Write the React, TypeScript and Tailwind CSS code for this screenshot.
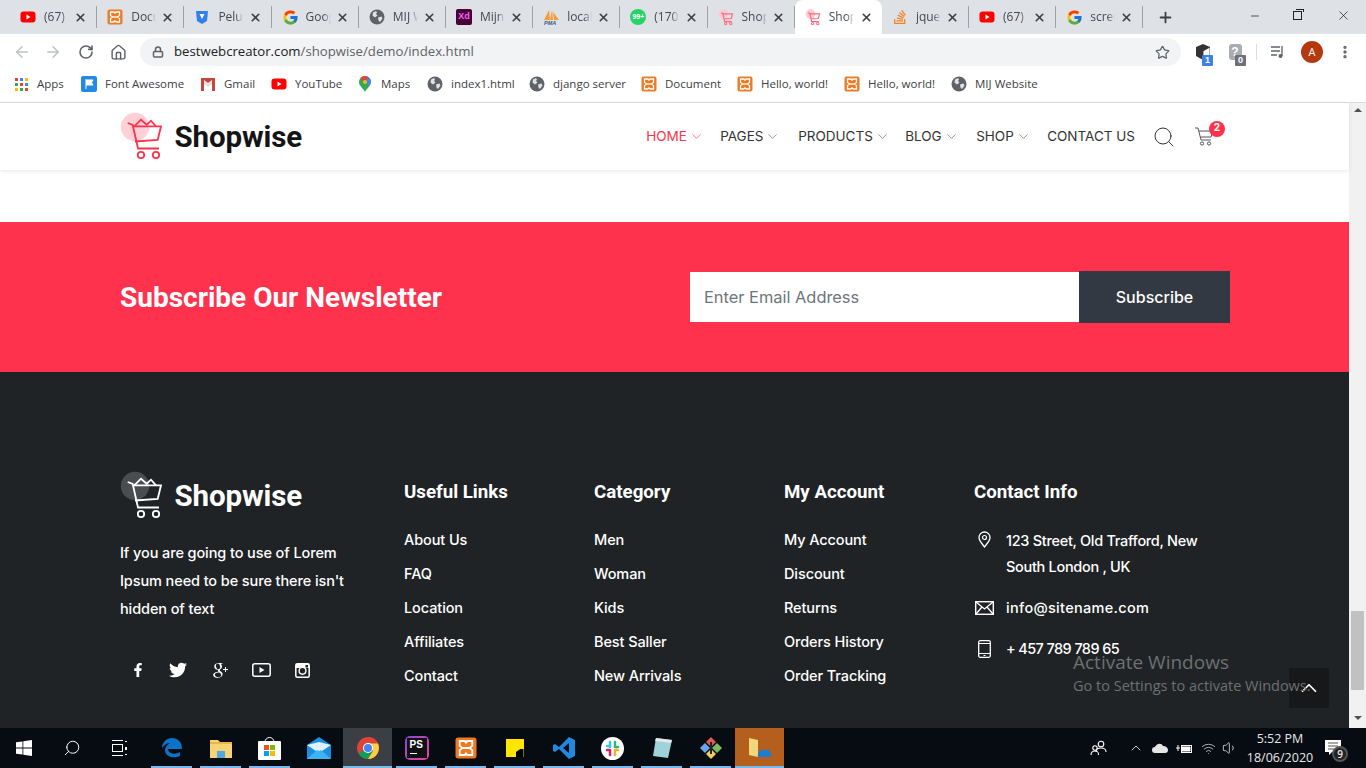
import React from "react";
import { FaFacebookF, FaTwitter, FaStackOverflow } from "react-icons/fa";
import { FcGoogle } from "react-icons/fc";
import { TiSocialGooglePlus } from "react-icons/ti";
import { LuChevronDown, LuChevronUp, LuPlus, LuX, LuMinus, LuArrowLeft, LuArrowRight, LuRotateCw, LuHouse, LuStar, LuLock, LuEllipsisVertical, LuSearch, LuVolume1, LuWifi } from "react-icons/lu";

const YouTubeIcon = () => (
  <svg width="16" height="16" viewBox="0 0 16 16"><rect x="0.5" y="2.5" width="15" height="11" rx="3" fill="#f00" /><path d="M6.5 5.5v5l4-2.5z" fill="#fff" /></svg>
);
const XamppIcon = () => (
  <svg width="16" height="16" viewBox="0 0 16 16">
    <rect x="0.5" y="0.5" width="15" height="15" rx="2" fill="#ee7a24" />
    <path d="M3.500 3h3c1 0 1.500.8 1.500 1.800C8 3.800 8.500 3 9.500 3h3v3.500L10.500 8l2 1.500V13h-3C8.500 13 8 12.200 8 11.200 8 12.200 7.500 13 6.500 13h-3V9.500l2-1.500-2-1.500z" fill="none" stroke="#fff" strokeWidth="1.300" />
    <path d="M5.500 8h5" stroke="#fff" strokeWidth="1.300" />
  </svg>
);
const GlobeIcon = () => (
  <svg width="16" height="16" viewBox="0 0 16 16"><circle cx="8" cy="8" r="7.500" fill="#5f6368" /><path d="M4 3.500l3-1.500 1 1.500-1 1.500 1.500 1.500L6 8.500 3.500 6.500zM9 8.500l3.500-1 1 2-2.500 3.500-1.500-1.500z" fill="#dee1e6" /></svg>
);
const ShopTabIcon = () => (
  <svg width="16" height="17" viewBox="0 0 44 50"><circle cx="15" cy="15" r="14.200" fill="#ffc9d1" /><path d="M7.700 11l5 2 5.300 24h21M13 14.300h28L37.700 28 15 29.500" fill="none" stroke="#ff6b7f" strokeWidth="3.500" /><circle cx="21" cy="43" r="3.500" fill="none" stroke="#ff6b7f" strokeWidth="3" /><circle cx="36" cy="43" r="3.500" fill="none" stroke="#ff6b7f" strokeWidth="3" /></svg>
);
const ShieldIcon = () => (
  <svg width="16" height="16" viewBox="0 0 16 16"><path d="M2 2h12l-1 10-5 3-5-3z" fill="#2f80ed" /><path d="M5.500 5h5l-2.500 5z" fill="#fff" /></svg>
);
const XdIcon = () => (
  <div className="flex h-[16px] w-[16px] items-center justify-center rounded-[2px] bg-[#470137] font-['Liberation_Sans',sans-serif] text-[9px] font-bold text-[#ff61f6]">Xd</div>
);
const PmaIcon = () => (
  <svg width="17" height="16" viewBox="0 0 17 16"><path d="M1 11L6 1l1 10zM7 11l2-10 1 10zM11 11L10 3l6 8z" fill="#f39c35" /><text x="1" y="16" fontSize="5.500" fontWeight="700" fontStyle="italic" fill="#3a5a8c" fontFamily="'Liberation Sans', sans-serif">PMA</text></svg>
);
const ChatBadgeIcon = () => (
  <div className="flex h-[16px] w-[16px] items-center justify-center rounded-full bg-[#25d366] font-['Liberation_Sans',sans-serif] text-[7px] font-bold text-white">99+</div>
);

const Logo = ({ dark }: { dark?: boolean }) => {
  const stroke = dark ? "#ffffff" : "#ff324d";
  return (
    <svg width="44" height="50" viewBox="0 0 44 50" className="shrink-0">
      <circle cx="15" cy="15" r="14.200" fill={dark ? "#4a4d4f" : "#ffd1d7"} />
      <path d="M7.700 11l5 2 5.300 23.500h21" fill="none" stroke={stroke} strokeWidth="1.800" />
      <path d="M13 14.300h28L37.700 28 15 29.500" fill="none" stroke={stroke} strokeWidth="1.800" />
      <path d="M14.300 14.300l6.700-6.600 5.700 5 4.300-4 5 5.600" fill="none" stroke={stroke} strokeWidth="1.800" />
      <circle cx="21" cy="43" r="3.200" fill="none" stroke={stroke} strokeWidth="1.800" />
      <circle cx="36" cy="43" r="3.200" fill="none" stroke={stroke} strokeWidth="1.800" />
    </svg>
  );
};

const tabs = [
  { icon: <YouTubeIcon />, label: "(67) YouTube" },
  { icon: <XamppIcon />, label: "Document" },
  { icon: <ShieldIcon />, label: "Peluru" },
  { icon: <FcGoogle size={17} />, label: "Google" },
  { icon: <GlobeIcon />, label: "MIJ Website" },
  { icon: <XdIcon />, label: "Mijn" },
  { icon: <PmaIcon />, label: "localhost" },
  { icon: <ChatBadgeIcon />, label: "(170) Chat" },
  { icon: <ShopTabIcon />, label: "Shopwise" },
  { icon: <ShopTabIcon />, label: "Shopwise", active: true },
  { icon: <FaStackOverflow size={16} color="#f48024" />, label: "jquery" },
  { icon: <YouTubeIcon />, label: "(67) YouTube" },
  { icon: <FcGoogle size={17} />, label: "screenshot" },
];

function TabStrip() {
  return (
    <div className="flex h-[34px] items-end bg-[#dee1e6] pl-[10px] font-['Open_Sans',sans-serif] text-[12px] text-[#45494e]">
      {tabs.map((t, i) => (
        <div
          key={i}
          className={`flex h-[34px] w-[87.200px] shrink-0 items-center pl-[10px] pr-[9px] ${t.active ? "rounded-t-[8px] bg-white" : "border-r border-[#9ea1a6] [border-image:linear-gradient(transparent_7px,#9ea1a6_7px,#9ea1a6_27px,transparent_27px)_1]"}`}
        >
          <div className="flex w-[24px] shrink-0 items-center">{t.icon}</div>
          <div className="w-[25px] overflow-hidden whitespace-nowrap [mask-image:linear-gradient(90deg,#000_70%,transparent)]">{t.label}</div>
          <LuX size={13} strokeWidth={3} className="ml-auto text-[#3c4043]" />
        </div>
      ))}
      <div className="flex h-[34px] w-[44px] items-center justify-center"><LuPlus size={17} strokeWidth={2.500} className="text-[#3c4043]" /></div>
      <div className="ml-auto flex h-[34px] text-[#222]">
        <div className="flex w-[44px] items-start justify-center pt-[10px]"><LuMinus size={12} strokeWidth={1.500} /></div>
        <div className="flex w-[44px] items-start justify-center pt-[11px] pr-[4px]">
          <div className="relative h-[9px] w-[9px] border border-[#222] bg-[#dee1e6]"><div className="absolute -right-[3px] -top-[3px] h-[3px] w-[8px] border-r border-t border-[#222]" /></div>
        </div>
        <div className="flex w-[45px] items-start justify-center pt-[8px]"><LuX size={15} strokeWidth={1.200} /></div>
      </div>
    </div>
  );
}

function Toolbar() {
  return (
    <div className="flex h-[36px] items-center bg-white pl-[13px] pr-[13px]">
      <LuArrowLeft size={18} className="text-[#bdc1c6]" />
      <LuArrowRight size={18} className="ml-[13px] text-[#bdc1c6]" />
      <LuRotateCw size={16} strokeWidth={2.400} className="ml-[16px] text-[#5f6368]" />
      <LuHouse size={17} strokeWidth={2} className="ml-[16px] text-[#5f6368]" />
      <div className="ml-[13px] flex h-[28px] w-[1041px] items-center rounded-full bg-[#f1f3f4] pl-[12px] pr-[10px] font-['Open_Sans',sans-serif] text-[13.200px]">
        <LuLock size={12} strokeWidth={3} className="text-[#5f6368]" />
        <span className="ml-[10px] text-[#202124]">bestwebcreator.com</span>
        <span className="text-[#5f6368]">/shopwise/demo/index.html</span>
        <LuStar size={15} className="ml-auto mr-[1px] text-[#5f6368]" />
      </div>
      <div className="relative ml-[14px] flex w-[16px] justify-center">
        <svg width="14" height="16" viewBox="0 0 14 16"><path d="M7 0l7 3v9l-7 4-7-4V3z" fill="#333" /><path d="M7 7v9l7-4V3z" fill="#fff" stroke="#333" strokeWidth="0.800" /></svg>
        <span className="absolute -bottom-[6px] left-[7px] rounded-[1px] bg-[#3b82e8] px-[3px] font-['Liberation_Sans',sans-serif] text-[9px] font-bold leading-[11px] text-white">1</span>
      </div>
      <div className="relative ml-[16px] flex w-[16px] justify-center">
        <div className="h-[16px] w-[13px] rounded-[3px] bg-[#a9acb5] text-center font-['Liberation_Sans',sans-serif] text-[12px] font-bold leading-[16px] text-white">?</div>
        <span className="absolute -bottom-[6px] left-[8px] rounded-[1px] bg-[#6e7079] px-[3px] font-['Liberation_Sans',sans-serif] text-[9px] font-bold leading-[11px] text-white">0</span>
      </div>
      <div className="ml-[13px] h-[16px] w-px bg-[#dadce0]" />
      <svg width="14" height="14" viewBox="0 0 14 14" className="ml-[14px]"><path d="M0 2h9M0 6h9M0 10h6" stroke="#5f6368" strokeWidth="1.300" /><path d="M11 1v10" stroke="#5f6368" strokeWidth="1.300" /><circle cx="9.500" cy="11" r="2" fill="#5f6368" /></svg>
      <div className="ml-[16px] flex h-[22px] w-[22px] items-center justify-center rounded-full bg-[#b5390f] font-['Open_Sans',sans-serif] text-[11px] text-white">A</div>
      <LuEllipsisVertical size={16} strokeWidth={3} className="ml-[14px] text-[#5f6368]" />
    </div>
  );
}

const Bookmark = ({ icon, label, className }: { icon: React.ReactNode; label: string; className: string }) => (
  <div className={`flex shrink-0 items-center gap-[8px] ${className}`}>
    <div className="flex w-[16px] justify-center">{icon}</div>
    <span className="whitespace-nowrap">{label}</span>
  </div>
);

function BookmarkBar() {
  return (
    <div className="flex h-[33px] items-center border-b border-[#dadce0] bg-white pb-[4px] pl-[13px] font-['Open_Sans',sans-serif] text-[11.500px] text-[#3c4043]">
      <Bookmark
        className="w-[68px]"
        label="Apps"
        icon={
          <div className="grid grid-cols-3 gap-[2px]">
            {["#ea4335", "#4285f4", "#fbbc05", "#34a853", "#ea4335", "#4285f4", "#fbbc05", "#34a853", "#ea4335"].map((c, i) => (
              <div key={i} className="h-[3px] w-[3px]" style={{ backgroundColor: c }} />
            ))}
          </div>
        }
      />
      <Bookmark
        className="w-[119px]"
        label="Font Awesome"
        icon={<svg width="16" height="16" viewBox="0 0 16 16"><rect width="16" height="16" rx="2" fill="#228ae6" /><path d="M5 3v10M5 4h7l-1.500 2.500L12 9H5" fill="#fff" stroke="#fff" /></svg>}
      />
      <Bookmark
        className="w-[71px]"
        label="Gmail"
        icon={<svg width="16" height="13" viewBox="0 0 16 13"><path d="M1 0h14v13h-3V5L8 8 4 5v8H1z" fill="#c5483a" /><path d="M4 2l4 3 4-3v3L8 8 4 5z" fill="#e8e8e8" /></svg>}
      />
      <Bookmark className="w-[86px]" label="YouTube" icon={<YouTubeIcon />} />
      <Bookmark
        className="w-[70px]"
        label="Maps"
        icon={<svg width="12" height="16" viewBox="0 0 12 16"><path d="M6 0a6 6 0 0 1 6 6c0 4-4 6-6 10C4 12 0 10 0 6a6 6 0 0 1 6-6z" fill="#34a853" /><path d="M2 1.500L10 10l2-4a6 6 0 0 0-1-3.500z" fill="#4285f4" /><path d="M6 0A6 6 0 0 0 1.500 2l3 3L10 1.500A6 6 0 0 0 6 0z" fill="#ea4335" /><circle cx="6" cy="6" r="2" fill="#fbbc05" /></svg>}
      />
      <Bookmark className="w-[102px]" label="index1.html" icon={<GlobeIcon />} />
      <Bookmark className="w-[112px]" label="django server" icon={<GlobeIcon />} />
      <Bookmark className="w-[96px]" label="Document" icon={<XamppIcon />} />
      <Bookmark className="w-[107px]" label="Hello, world!" icon={<XamppIcon />} />
      <Bookmark className="w-[107px]" label="Hello, world!" icon={<XamppIcon />} />
      <Bookmark className="w-[100px]" label="MIJ Website" icon={<GlobeIcon />} />
    </div>
  );
}

const navItems = [
  { label: "HOME", w: "w-[74px]", active: true },
  { label: "PAGES", w: "w-[78px]" },
  { label: "PRODUCTS", w: "w-[107px]" },
  { label: "BLOG", w: "w-[71px]" },
  { label: "SHOP", w: "w-[71px]" },
];

function SiteHeader() {
  return (
    <div className="relative flex h-[67px] items-center bg-white pl-[120px] shadow-[0_1px_4px_rgba(0,0,0,0.1)]">
      <Logo />
      <span className="ml-[10.500px] pt-[2px] font-['Roboto',sans-serif] text-[29.500px] font-bold leading-none tracking-[-0.100px] text-[#141414]">Shopwise</span>
      <nav className="ml-auto mr-[134px] flex items-center font-['Inter',sans-serif] text-[13.500px] text-[#333]">
        {navItems.map((n) => (
          <div key={n.label} className={`flex items-center gap-[2px] ${n.w} ${n.active ? "text-[#ff324d]" : ""}`}>
            <span>{n.label}</span>
            <LuChevronDown size={15} strokeWidth={1} className={n.active ? "text-[#ff324d]" : "text-[#555]"} />
          </div>
        ))}
        <span className="whitespace-nowrap">CONTACT US</span>
        <LuSearch size={24} strokeWidth={1} className="ml-[17px] text-[#333]" />
        <div className="relative ml-[19px] h-[20px] w-[20px]">
          <svg width="19" height="20" viewBox="0 0 19 20"><path d="M0 1h3l3 12h10M4 4h14l-2 6H5.500" fill="none" stroke="#444" strokeWidth="0.900" /><circle cx="7" cy="16.500" r="1.600" fill="none" stroke="#444" strokeWidth="0.900" /><circle cx="14" cy="16.500" r="1.600" fill="none" stroke="#444" strokeWidth="0.900" /></svg>
          <span className="absolute -top-[6px] left-[14px] flex h-[16px] w-[16px] items-center justify-center rounded-full bg-[#ff324d] font-['Roboto',sans-serif] text-[11px] font-bold text-white">2</span>
        </div>
      </nav>
    </div>
  );
}

function Newsletter() {
  return (
    <div className="flex h-[150px] items-center bg-[#ff324d] pl-[120px]">
      <h3 className="w-[570px] pt-[2px] font-['Roboto',sans-serif] text-[28px] font-bold text-white">Subscribe Our Newsletter</h3>
      <div className="flex h-[50px] w-[389px] items-center bg-white pl-[14px] font-['Inter',sans-serif] text-[16.400px] text-[#6c757d]">Enter Email Address</div>
      <div className="flex h-[52px] w-[151px] items-center justify-center bg-[#333942] font-['Inter',sans-serif] text-[16px] font-medium text-white">Subscribe</div>
    </div>
  );
}

const linkCols = [
  { title: "Useful Links", links: ["About Us", "FAQ", "Location", "Affiliates", "Contact"] },
  { title: "Category", links: ["Men", "Woman", "Kids", "Best Saller", "New Arrivals"] },
  { title: "My Account", links: ["My Account", "Discount", "Returns", "Orders History", "Order Tracking"] },
];

function Footer() {
  return (
    <div className="flex h-[356px] items-start bg-[#202325] pl-[120px] pt-[99px] font-['Inter',sans-serif] text-[14.500px] font-medium tracking-[-0.100px] text-white">
      <div className="w-[284px]">
        <div className="flex items-center">
          <Logo dark />
          <span className="ml-[10.500px] pt-[2px] font-['Roboto',sans-serif] text-[29.500px] font-bold leading-none tracking-[-0.100px]">Shopwise</span>
        </div>
        <p className="mt-[18px] w-[240px] leading-[28px]">If you are going to use of Lorem Ipsum need to be sure there isn't hidden of text</p>
        <div className="mt-[33px] flex h-[28px] items-center">
          <div className="flex w-[36px] justify-center"><FaFacebookF size={14} /></div>
          <div className="flex w-[43px] justify-center"><FaTwitter size={18} /></div>
          <div className="flex w-[42px] justify-center"><TiSocialGooglePlus size={24} /></div>
          <div className="flex w-[41px] justify-center">
            <svg width="19" height="14" viewBox="0 0 19 14"><rect x="0.800" y="0.800" width="17.400" height="12.400" rx="2" fill="none" stroke="#fff" strokeWidth="1.500" /><path d="M7.500 4v6l5-3z" fill="#fff" /></svg>
          </div>
          <div className="flex w-[41px] justify-center">
            <svg width="15" height="15" viewBox="0 0 15 15"><rect x="0.800" y="0.800" width="13.400" height="13.400" rx="1.500" fill="none" stroke="#fff" strokeWidth="1.500" /><path d="M1 1h13v4H1z" fill="#fff" /><circle cx="7.500" cy="7.800" r="3.400" fill="#202325" stroke="#fff" strokeWidth="1.400" /><rect x="10.500" y="2" width="2.500" height="2.500" fill="#202325" /></svg>
          </div>
        </div>
      </div>
      {linkCols.map((c) => (
        <div key={c.title} className="w-[190px]">
          <h6 className="mt-[9px] font-['Roboto',sans-serif] text-[18.700px] font-bold leading-[24px] tracking-normal">{c.title}</h6>
          <div className="mt-[24px] flex flex-col gap-[10px]">
            {c.links.map((l) => (
              <div key={l} className="h-[24px] leading-[24px]">{l}</div>
            ))}
          </div>
        </div>
      ))}
      <div className="w-[255px]">
        <h6 className="mt-[9px] font-['Roboto',sans-serif] text-[18.700px] font-bold leading-[24px] tracking-normal">Contact Info</h6>
        <div className="mt-[24px] flex">
          <div className="flex w-[32px] justify-center pr-[12px] pt-[3px]">
            <svg width="13" height="17" viewBox="0 0 13 17"><path d="M6.500 1A5.500 5.500 0 0 0 1 6.500c0 3.500 3.500 6.500 5.500 9.500 2-3 5.500-6 5.500-9.500A5.500 5.500 0 0 0 6.500 1z" fill="none" stroke="#fff" strokeWidth="1.300" /><circle cx="6.500" cy="6.500" r="2" fill="none" stroke="#fff" strokeWidth="1.200" /></svg>
          </div>
          <div className="w-[210px] leading-[26px] tracking-[-0.300px]">123 Street, Old Trafford, New South London , UK</div>
        </div>
        <div className="mt-[15px] flex h-[26px] items-center">
          <div className="flex w-[32px] justify-center pr-[12px]">
            <svg width="19" height="14" viewBox="0 0 19 14"><rect x="0.700" y="0.700" width="17.600" height="12.600" fill="none" stroke="#fff" strokeWidth="1.400" /><path d="M1 1l8.500 7L18 1M1 13l6-7M18 13l-6-7" fill="none" stroke="#fff" strokeWidth="1.300" /></svg>
          </div>
          <span className="tracking-[0.300px]">info@sitename.com</span>
        </div>
        <div className="mt-[15px] flex h-[26px] items-center">
          <div className="flex w-[32px] justify-center pr-[12px]">
            <svg width="13" height="18" viewBox="0 0 13 18"><rect x="0.700" y="0.700" width="11.600" height="16.600" rx="1.500" fill="none" stroke="#fff" strokeWidth="1.300" /><path d="M1 3.500h11M1 13.500h11M5.500 15.500h2" stroke="#fff" strokeWidth="1.100" /></svg>
          </div>
          <span className="tracking-[-0.600px]">+ 457 789 789 65</span>
        </div>
      </div>
    </div>
  );
}

function Scrollbar() {
  return (
    <div className="flex w-[17px] shrink-0 flex-col items-center bg-[#f1f1f1]">
      <div className="mt-[5px] h-0 w-0 border-x-[4px] border-b-[4px] border-x-transparent border-b-[#505050]" />
      <div className="mt-[499px] h-[79px] w-[13px] bg-[#c1c1c1]" />
      <div className="mt-[26px] h-0 w-0 border-x-[4px] border-t-[4px] border-x-transparent border-t-[#505050]" />
    </div>
  );
}

const Cell = ({ children, open, active, className }: { children: React.ReactNode; open?: boolean; active?: boolean; className?: string }) => (
  <div className={`relative flex h-[40px] w-[49px] shrink-0 items-center justify-center ${className ?? ""}`}>
    {children}
    {open && <div className={`absolute bottom-0 h-[2px] bg-[#76b9ed] ${active ? "inset-x-0" : "inset-x-[4px]"}`} />}
  </div>
);

function Taskbar() {
  return (
    <div className="flex h-[40px] items-center bg-[#070b12] font-['Open_Sans',sans-serif] text-white">
      <div className="flex h-[40px] w-[48px] items-center justify-center">
        <svg width="16" height="16" viewBox="0 0 16 16" fill="#fff"><path d="M0 2.300l6.500-.9v6.200H0zM7.300 1.300L16 0v7.600H7.300zM0 8.400h6.500v6.200L0 13.700zM7.300 8.400H16V16l-8.700-1.300z" /></svg>
      </div>
      <div className="flex h-[40px] w-[48px] items-center justify-center"><LuSearch size={18} strokeWidth={1.300} className="-scale-x-100" /></div>
      <div className="flex h-[40px] w-[51px] items-center justify-center pr-[3px]">
        <svg width="16" height="16" viewBox="0 0 16 16" fill="none" stroke="#fff"><path d="M0 .5h11M0 15.500h11" /><rect x="0.500" y="4.500" width="10" height="7" /><path d="M14 1v1M14 7v3M14 14v1" strokeWidth="2" /></svg>
      </div>
      <Cell open><svg width="22" height="22" viewBox="0 0 22 22"><path d="M1 11C1 5 6 1 11 1c6 0 10 4 10 11H7c0 5 8 6 12 3v4c-6 3-15 1-15-6 0-3 2-5 5-7-4 0-6 3-8 5z" fill="#0a73c9" /></svg></Cell>
      <Cell open><svg width="22" height="20" viewBox="0 0 22 20"><path d="M0 2h8l2 2h12v16H0z" fill="#f6d475" /><path d="M7 13h8v7H7z" fill="#4fa6e0" /><path d="M0 4h22v2H0z" fill="#e6b84a" /></svg></Cell>
      <Cell open><svg width="23" height="24" viewBox="0 0 23 24"><path d="M7 6a4.500 4.500 0 0 1 9 0" fill="none" stroke="#fff" /><rect y="5" width="23" height="19" rx="1" fill="#fff" /><rect x="6" y="9" width="5" height="5" fill="#f25022" /><rect x="12" y="9" width="5" height="5" fill="#7fba00" /><rect x="6" y="15" width="5" height="5" fill="#00a4ef" /><rect x="12" y="15" width="5" height="5" fill="#ffb900" /></svg></Cell>
      <Cell><svg width="24" height="22" viewBox="0 0 24 22"><path d="M0 8L12 0l12 8v14H0z" fill="#1b8fe0" /><path d="M0 8l12 8 12-8-12-3z" fill="#dff1fc" /><path d="M0 22l10-9 2 1 2-1 10 9z" fill="#3fb3f2" /></svg></Cell>
      <Cell open active className="bg-[#3b3e42]">
        <svg width="22" height="22" viewBox="0 0 22 22"><circle cx="11" cy="11" r="11" fill="#db4437" /><path d="M11 11L1.500 16.500A11 11 0 0 0 11 22l5-8z" fill="#0f9d58" /><path d="M11 0a11 11 0 0 1 10 6.500H11z" fill="#db4437" /><path d="M21 6.500A11 11 0 0 1 11 22l5-8-5-7.500z" fill="#ffcd40" /><circle cx="11" cy="11" r="5" fill="#fff" /><circle cx="11" cy="11" r="4" fill="#4285f4" /></svg>
      </Cell>
      <Cell open>
        <div className="flex h-[24px] w-[24px] items-center rounded-[5px] bg-gradient-to-br from-[#8f3fd8] to-[#e8409a] p-[2px]"><div className="flex h-full w-full flex-col bg-[#111] pl-[3px] pt-[1px] font-['Liberation_Sans',sans-serif] text-[10px] font-bold leading-[12px]">PS<div className="mt-[2px] h-[1px] w-[7px] bg-white" /></div></div>
      </Cell>
      <Cell open><div className="scale-[1.400]"><XamppIcon /></div></Cell>
      <Cell open>
        <div className="relative h-[18px] w-[18px] bg-[#ffe600]"><div className="absolute bottom-0 right-0 h-[8px] w-[8px] bg-black [clip-path:polygon(100%_0,100%_100%,0_100%,0_40%,60%_0)]" /></div>
      </Cell>
      <Cell open><svg width="24" height="24" viewBox="0 0 24 24"><path d="M17 1l6 3v16l-6 3L7 13l-4 3-2-1V9l2-1 4 3zM17 7l-6 5 6 5z" fill="#1f8ae0" fillRule="evenodd" /></svg></Cell>
      <Cell open>
        <svg width="23" height="23" viewBox="0 0 23 23"><circle cx="11.500" cy="11.500" r="11.500" fill="#fff" /><path d="M9 5v5M6 9h3" stroke="#36c5f0" strokeWidth="2.500" strokeLinecap="round" /><path d="M14 5v5M14 10h3" stroke="#2eb67d" strokeWidth="2.500" strokeLinecap="round" /><path d="M14 13v5M14 13h3" stroke="#ecb22e" strokeWidth="2.500" strokeLinecap="round" /><path d="M9 13v5M6 13h3" stroke="#e01e5a" strokeWidth="2.500" strokeLinecap="round" /></svg>
      </Cell>
      <Cell open><svg width="22" height="22" viewBox="0 0 22 22"><path d="M5 1l16 2-4 18-15-2z" fill="#9fd3d8" /><path d="M5 1l16 2-1 3L4 4z" fill="#e3e7e7" /></svg></Cell>
      <Cell open><svg width="24" height="24" viewBox="0 0 24 24"><path d="M12 1l5 5-5 5-5-5z" fill="#e05a55" /><path d="M1 12l5-5 5 5-5 5z" fill="#6aa5f2" /><path d="M13 12l5-5 5 5-5 5z" fill="#7dbb5e" /><path d="M12 13l5 5-5 5-5-5z" fill="#f2cf5a" /><path d="M12 6v12" stroke="#222" strokeWidth="2" /></svg></Cell>
      <Cell open active className="bg-[#b45f1d]">
        <svg width="24" height="22" viewBox="0 0 24 22"><path d="M1 1l9 2v17l-9-2z" fill="#f5d67a" /><path d="M10 20c-1-5 3-8 7-7 4-1 7 3 6 7z" fill="#1a7fd1" /></svg>
      </Cell>
      <div className="ml-auto flex h-[40px] items-center text-[#e8e8e8]">
        <svg width="17" height="16" viewBox="0 0 17 16" fill="none" stroke="#fff" strokeWidth="1.100"><circle cx="11" cy="4" r="2.800" /><path d="M6 12c0-3 2-4 5-4s5 1 5 4" /><circle cx="5" cy="8" r="2.200" /><path d="M1 15c0-3 1-4 4-4s3.500 1 3.500 4" /></svg>
        <LuChevronUp size={16} strokeWidth={1.300} className="ml-[21px]" />
        <svg width="16" height="10" viewBox="0 0 16 10" className="ml-[8px]"><path d="M3 10a3 3 0 0 1 0-6c1-3 6-5 8-1 3 0 5 2 5 4s-1 3-3 3z" fill="#e6e6e6" /></svg>
        <svg width="16" height="11" viewBox="0 0 16 11" className="ml-[8px]" fill="none" stroke="#fff"><rect x="5.500" y="2.500" width="10" height="7" /><path d="M6 4h8v4H6z" fill="#fff" /><path d="M0 5h4M2 2v6" /></svg>
        <LuWifi size={15} strokeWidth={1.300} className="ml-[9px] text-[#ccc]" />
        <LuVolume1 size={16} strokeWidth={1.200} className="ml-[6px]" />
        <div className="ml-[10px] flex w-[64px] flex-col items-center text-[12.500px] leading-[19px]">
          <span>5:52 PM</span>
          <span>18/06/2020</span>
        </div>
        <div className="relative ml-[13px] mr-[25px] h-[16px] w-[16px]">
          <svg width="16" height="16" viewBox="0 0 16 16"><path d="M0 0h16v12H7l-3 3v-3H0z" fill="#fff" /><path d="M3 3h10M3 6h10M3 9h6" stroke="#555" /></svg>
          <span className="absolute -bottom-[6px] left-[7px] flex h-[16px] w-[16px] items-center justify-center rounded-full border-2 border-[#555] bg-[#222] text-[10px] font-semibold">9</span>
        </div>
      </div>
    </div>
  );
}

export default function App() {
  return (
    <div className="relative flex h-[768px] w-[1366px] flex-col overflow-hidden bg-white">
      <TabStrip />
      <Toolbar />
      <BookmarkBar />
      <div className="flex h-[625px] shrink-0">
        <div className="min-w-0 flex-1">
          <SiteHeader />
          <div className="h-[52px] bg-white" />
          <Newsletter />
          <Footer />
        </div>
        <Scrollbar />
      </div>
      <Taskbar />

      {/* back-to-top and the watermark float over the footer */}
      <div className="absolute left-[1289px] top-[668px] flex h-[40px] w-[40px] items-center justify-center bg-[#171819]">
        <LuChevronUp size={26} strokeWidth={1.600} className="text-white" />
      </div>
      <div className="absolute left-[1073px] top-[650px] font-['Open_Sans',sans-serif] text-[#6e7072]">
        <div className="text-[19px] leading-[24px]">Activate Windows</div>
        <div className="mt-[2px] whitespace-nowrap text-[14.500px] leading-[20px]">Go to Settings to activate Windows.</div>
      </div>
    </div>
  );
}
